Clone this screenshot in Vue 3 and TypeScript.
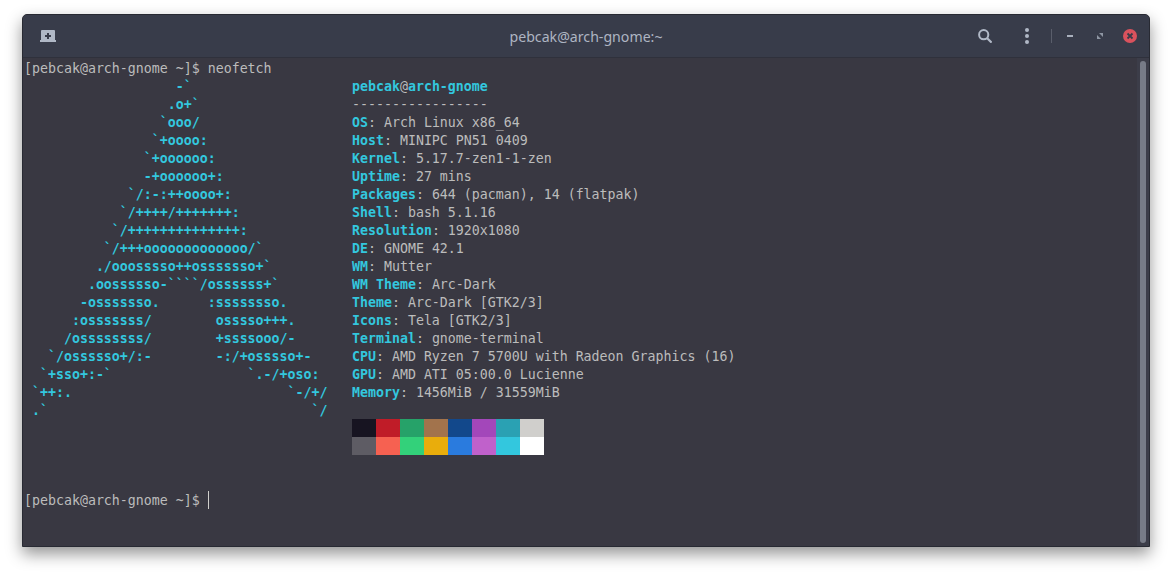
<script setup lang="ts">
interface InfoRow { label?: string; value?: string }

const art: string[] = [
  '                   -`',
  '                  .o+`',
  '                 `ooo/',
  '                `+oooo:',
  '               `+oooooo:',
  '               -+oooooo+:',
  '             `/:-:++oooo+:',
  '            `/++++/+++++++:',
  '           `/++++++++++++++:',
  '          `/+++ooooooooooooo/`',
  '         ./ooosssso++osssssso+`',
  '        .oossssso-````/ossssss+`',
  '       -osssssso.      :ssssssso.',
  '      :osssssss/        osssso+++.',
  '     /ossssssss/        +ssssooo/-',
  '   `/ossssso+/:-        -:/+osssso+-',
  '  `+sso+:-`                 `.-/+oso:',
  ' `++:.                           `-/+/',
  ' .`                                 `/',
]

const info: InfoRow[] = [
  { label: 'OS', value: 'Arch Linux x86_64' },
  { label: 'Host', value: 'MINIPC PN51 0409' },
  { label: 'Kernel', value: '5.17.7-zen1-1-zen' },
  { label: 'Uptime', value: '27 mins' },
  { label: 'Packages', value: '644 (pacman), 14 (flatpak)' },
  { label: 'Shell', value: 'bash 5.1.16' },
  { label: 'Resolution', value: '1920x1080' },
  { label: 'DE', value: 'GNOME 42.1' },
  { label: 'WM', value: 'Mutter' },
  { label: 'WM Theme', value: 'Arc-Dark' },
  { label: 'Theme', value: 'Arc-Dark [GTK2/3]' },
  { label: 'Icons', value: 'Tela [GTK2/3]' },
  { label: 'Terminal', value: 'gnome-terminal' },
  { label: 'CPU', value: 'AMD Ryzen 7 5700U with Radeon Graphics (16)' },
  { label: 'GPU', value: 'AMD ATI 05:00.0 Lucienne' },
  { label: 'Memory', value: '1456MiB / 31559MiB' },
]

const palette: string[] = [
  '#171421', '#c01c28', '#26a269', '#a2734c', '#12488b', '#a347ba', '#2aa1b3', '#d0cfcc',
  '#5e5c64', '#f66151', '#33d17a', '#e9ad0c', '#2a7bde', '#c061cb', '#33c7de', '#ffffff',
]
</script>

<template>
  <div class="page">
    <div class="window">
      <header class="titlebar">
        <div class="bar-left">
          <svg class="new-tab" width="16" height="12" viewBox="0 0 16 12">
            <path fill="#b0b8c6" fill-rule="evenodd" d="M2 0h12a1 1 0 0 1 1 1v9h1v2H0v-2h1V1a1 1 0 0 1 1-1zM7 3v2H5v2h2v2h2V7h2V5H9V3z" />
          </svg>
        </div>
        <div class="title">pebcak@arch-gnome:~</div>
        <div class="bar-right">
          <svg class="search" width="14" height="14" viewBox="0 0 14 14">
            <circle cx="5.7" cy="5.7" r="4.6" fill="none" stroke="#b0b8c6" stroke-width="2" />
            <path d="M9 9l4.6 4.6" stroke="#b0b8c6" stroke-width="2.2" />
          </svg>
          <svg class="menu" width="6" height="16" viewBox="0 0 6 16">
            <circle cx="3" cy="2" r="2" fill="#b0b8c6" />
            <circle cx="3" cy="8" r="2" fill="#b0b8c6" />
            <circle cx="3" cy="14" r="2" fill="#b0b8c6" />
          </svg>
          <span class="sep"></span>
          <span class="min"></span>
          <svg class="restore" width="6" height="6" viewBox="0 0 6 6">
            <path fill="#8f96a3" d="M2 0h4v4zM0 2l4 4H0z" />
          </svg>
          <svg class="close" width="14" height="14" viewBox="0 0 14 14">
            <circle cx="7" cy="7" r="7" fill="#d9525d" />
            <path d="M4.5 4.5l5 5M9.5 4.5l-5 5" stroke="#383c4a" stroke-width="1.8" />
          </svg>
        </div>
      </header>

      <div class="content">
        <main class="terminal">
          <div class="line">[pebcak@arch-gnome ~]$ neofetch</div>
          <div class="neofetch">
            <div class="art">
              <div v-for="(row, i) in art" :key="i" class="line">{{ row }}</div>
            </div>
            <div class="info">
              <div class="line"><span class="hl">pebcak</span>@<span class="hl">arch-gnome</span></div>
              <div class="line">-----------------</div>
              <div v-for="row in info" :key="row.label" class="line"><span class="hl">{{ row.label }}</span>: {{ row.value }}</div>
              <div class="line"></div>
              <div class="swatches">
                <span v-for="c in palette" :key="c" class="swatch" :style="{ background: c }"></span>
              </div>
            </div>
          </div>
          <div class="line prompt">[pebcak@arch-gnome ~]$ <span class="cursor"></span></div>
        </main>
        <div class="scrollbar"><div class="thumb"></div></div>
      </div>
    </div>
  </div>
</template>

<style>
html, body { background: #ffffff; margin: 0; }
</style>

<style scoped>
.page {
  height: 577px;
  box-sizing: border-box;
  padding: 14px 22px 0;
  overflow: hidden;
}
.window {
  height: 533px;
  box-sizing: border-box;
  display: flex;
  flex-direction: column;
  border: 1px solid #282a33;
  border-radius: 5px 5px 0 0;
  overflow: hidden;
  box-shadow: 0 7px 16px rgba(0, 0, 0, 0.42);
  background: #393842;
}
.titlebar {
  height: 43px;
  flex: none;
  box-sizing: border-box;
  background: #383c4a;
  border-bottom: 1px solid #2f313c;
  display: grid;
  grid-template-columns: 1fr auto 1fr;
  align-items: center;
}
.bar-left { display: flex; padding-left: 17px; }
.new-tab { display: block; }
.title {
  font-family: "Noto Sans", sans-serif;
  font-size: 14.15px;
  color: #aeb5c2;
}
.bar-right {
  display: flex;
  align-items: center;
  justify-content: flex-end;
  height: 100%;
}
.search { margin-right: 32px; }
.menu { margin-right: 21px; }
.sep { width: 1px; height: 14px; background: #5a5e6b; margin-right: 15px; }
.min { width: 6px; height: 2px; background: #a9b0bd; margin-right: 24px; }
.restore { margin-right: 20px; }
.close { margin-right: 12px; }
.content {
  flex: 1;
  display: flex;
  min-height: 0;
}
.terminal {
  flex: 1;
  padding: 2px 0 0 1px;
  font-family: "DejaVu Sans Mono", monospace;
  font-size: 13.28px;
  line-height: 18px;
  color: #bcbcbc;
}
.line {
  height: 18px;
  white-space: pre;
}
.neofetch { display: flex; }
.art {
  width: 328px;
  font-weight: 700;
  color: #33c7de;
}
.hl { font-weight: 700; color: #33c7de; }
.swatches {
  display: grid;
  grid-template-columns: repeat(8, 24px);
  grid-auto-rows: 18px;
  margin: -1px 0 1px;
}
.prompt { margin-top: 36px; }
.cursor {
  display: inline-block;
  width: 1px;
  height: 18px;
  margin-top: -1px;
  background: #d0cfcc;
  vertical-align: top;
}
.scrollbar {
  width: 12px;
  flex: none;
  box-sizing: border-box;
  padding: 3px 3px 3px 3px;
  background: #3c3d49;
}
.thumb {
  height: 100%;
  width: 6px;
  border-radius: 3px;
  background: #777b87;
}
</style>
